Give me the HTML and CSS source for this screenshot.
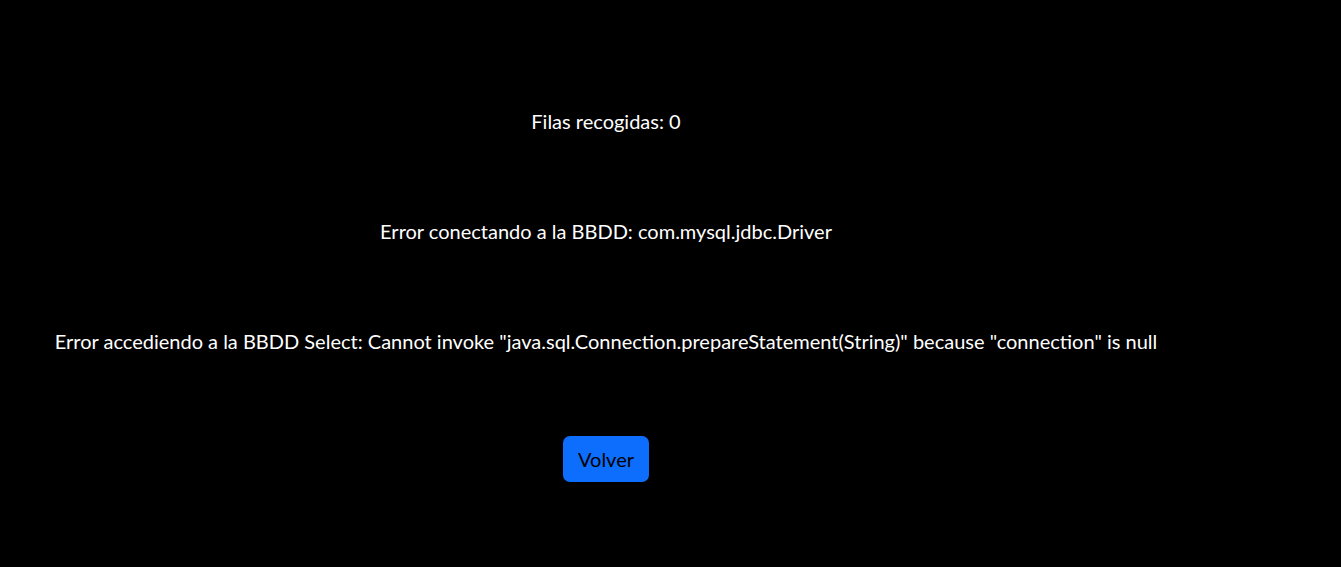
FILE: index.html
```html
<!DOCTYPE html>
<html lang="es">
<head>
<meta charset="utf-8">
<title>Resultado</title>
<link rel="stylesheet" href="styles.css">
</head>
<body>
<main class="page">
  <p class="line">Filas recogidas: 0</p>
  <p class="line">Error conectando a la BBDD: com.mysql.jdbc.Driver</p>
  <p class="line">Error accediendo a la BBDD Select: Cannot invoke "java.sql.Connection.prepareStatement(String)" because "connection" is null</p>
  <button class="btn" type="button">Volver</button>
</main>
</body>
</html>
```
FILE: styles.css
```css
html, body {
  margin: 0;
  background: #000;
}
body {
  color: #fff;
  font-family: Lato, "Open Sans", sans-serif;
  font-size: 20px;
  line-height: 30px;
}
.page {
  width: 1212px;
  display: flex;
  flex-direction: column;
  align-items: center;
  gap: 80px;
  padding-top: 106px;
  text-align: center;
}
.line {
  margin: 0;
  white-space: nowrap;
}
.btn {
  font-family: inherit;
  font-size: 20px;
  line-height: 30px;
  color: #000;
  background: #0d6efd;
  border: 0;
  border-radius: 7px;
  padding: 8px 15px;
  cursor: pointer;
}
```
